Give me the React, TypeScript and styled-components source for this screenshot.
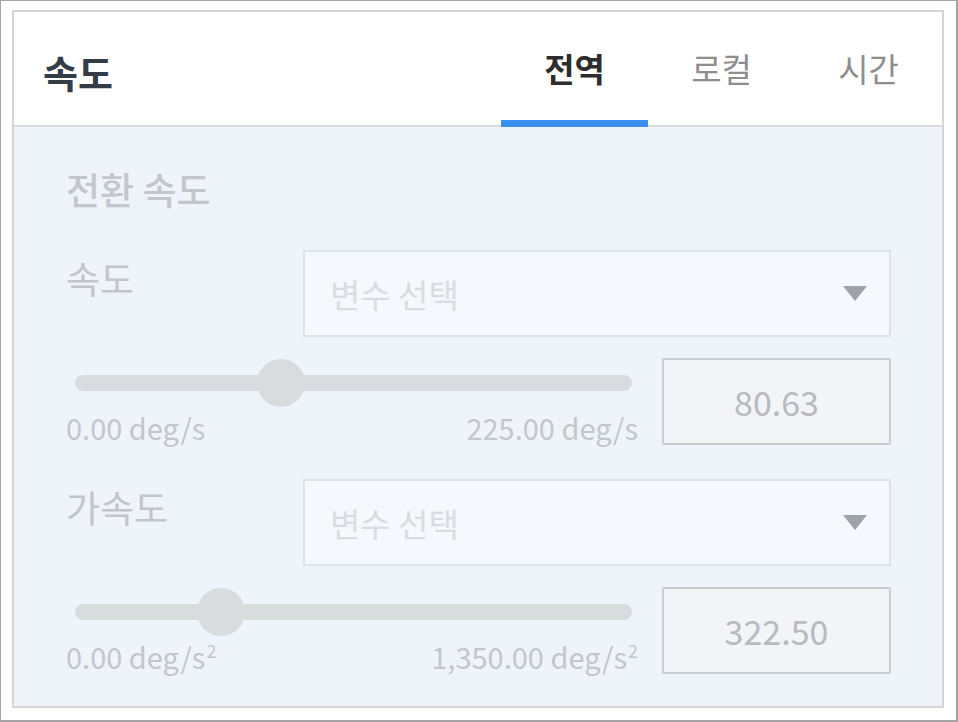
import React from "react";
import styled, { createGlobalStyle } from "styled-components";

const Global = createGlobalStyle`
  html, body { margin: 0; padding: 0; background: #ffffff; }
  body { font-family: "Noto Sans CJK KR", "Noto Sans", sans-serif; }
  * { box-sizing: border-box; }
`;

const Frame = styled.div`
  width: 958px;
  height: 722px;
  border: 1px solid #a4a4a4;
  border-right-width: 2px;
  border-bottom-width: 2px;
  padding: 9px 12px 12px 11px;
  display: flex;
`;

const Panel = styled.section`
  flex: 1;
  border: 2px solid #d4d5d7;
  background: #eff4fb;
  display: flex;
  flex-direction: column;
`;

const Header = styled.header`
  height: 115px;
  background: #ffffff;
  border-bottom: 2px solid #d9dadc;
  display: flex;
  align-items: stretch;
`;

const Title = styled.h1`
  flex: 1;
  margin: 0;
  padding-left: 29px;
  padding-top: 6px;
  display: flex;
  align-items: center;
  font-size: 38px;
  font-weight: 700;
  color: #343c47;
`;

const Tabs = styled.nav`
  display: flex;
`;

const Tab = styled.div<{ $active?: boolean }>`
  width: 147px;
  margin-bottom: -2px;
  padding-top: 4px;
  display: flex;
  align-items: center;
  justify-content: center;
  font-size: 33px;
  font-weight: ${(p) => (p.$active ? 700 : 400)};
  color: ${(p) => (p.$active ? "#2d2d2d" : "#8e8e8e")};
  border-bottom: 7px solid ${(p) => (p.$active ? "#3a8ff2" : "transparent")};
`;

const Body = styled.div`
  flex: 1;
  padding: 42px 51px 0 52px;
  display: flex;
  flex-direction: column;
`;

const SectionTitle = styled.h2`
  margin: 0 0 41px;
  height: 40px;
  line-height: 40px;
  font-size: 37px;
  font-weight: 500;
  color: #c3c7cd;
`;

const Field = styled.div<{ $gap?: number }>`
  display: flex;
  flex-direction: column;
  gap: 21px;
  margin-bottom: ${(p) => p.$gap ?? 0}px;
`;

const SelectRow = styled.div`
  display: flex;
  align-items: flex-start;
`;

const Label = styled.div`
  width: 237px;
  line-height: 56px;
  font-size: 37px;
  color: #c2c6cc;
`;

const Select = styled.div`
  flex: 1;
  height: 87px;
  border: 2px solid #dfe2e6;
  background: #f5f8fc;
  display: flex;
  align-items: center;
  justify-content: space-between;
  padding: 0 22px 0 25px;
  font-size: 33px;
  color: #d9dce1;
`;

const Caret = styled.span`
  width: 0;
  height: 0;
  border-left: 12px solid transparent;
  border-right: 12px solid transparent;
  border-top: 15px solid #9ea2a9;
`;

const SliderRow = styled.div`
  display: flex;
  align-items: flex-start;
  gap: 24px;
`;

const SliderCol = styled.div`
  flex: 1;
  display: flex;
  flex-direction: column;
`;

const TrackArea = styled.div`
  height: 48px;
  margin: 1px 6px 0 9px;
  display: flex;
  align-items: center;
  position: relative;
`;

const Track = styled.div`
  flex: 1;
  height: 16px;
  border-radius: 8px;
  background: #d9dcdf;
`;

const Thumb = styled.div`
  position: absolute;
  top: 0;
  width: 48px;
  height: 48px;
  border-radius: 50%;
  background: #d9dcdf;
  transform: translateX(-50%);
`;

const Range = styled.div`
  display: flex;
  justify-content: space-between;
  line-height: 40px;
  font-size: 29px;
  color: #c3c7cc;
  sup {
    font-size: 18px;
    vertical-align: 0;
    position: relative;
    top: -11px;
    margin-left: 1px;
  }
`;

const ValueBox = styled.div`
  width: 229px;
  height: 87px;
  border: 2px solid #cacdd2;
  border-radius: 2px;
  background: #f2f4f7;
  display: flex;
  align-items: center;
  justify-content: center;
  font-size: 34px;
  color: #b7bbc0;
`;

type FieldDef = {
  label: string;
  value: number;
  max: number;
  unit: React.ReactNode;
  minText: string;
  maxText: string;
  valueText: string;
};

const fields: FieldDef[] = [
  {
    label: "속도",
    value: 80.63,
    max: 225,
    unit: "deg/s",
    minText: "0.00",
    maxText: "225.00",
    valueText: "80.63",
  },
  {
    label: "가속도",
    value: 322.5,
    max: 1350,
    unit: (
      <>
        deg/s<sup>2</sup>
      </>
    ),
    minText: "0.00",
    maxText: "1,350.00",
    valueText: "322.50",
  },
];

function SpeedField({ f, gap }: { f: FieldDef; gap: number }) {
  const pct = f.value / f.max;
  return (
    <Field $gap={gap}>
      <SelectRow>
        <Label>{f.label}</Label>
        <Select>
          <span>변수 선택</span>
          <Caret />
        </Select>
      </SelectRow>
      <SliderRow>
        <SliderCol>
          <TrackArea>
            <Track />
            <Thumb style={{ left: `calc(24px + (100% - 48px) * ${pct})` }} />
          </TrackArea>
          <Range>
            <span>
              {f.minText} {f.unit}
            </span>
            <span>
              {f.maxText} {f.unit}
            </span>
          </Range>
        </SliderCol>
        <ValueBox>{f.valueText}</ValueBox>
      </SliderRow>
    </Field>
  );
}

export default function App() {
  return (
    <>
      <Global />
      <Frame>
        <Panel>
          <Header>
            <Title>속도</Title>
            <Tabs>
              <Tab $active>전역</Tab>
              <Tab>로컬</Tab>
              <Tab>시간</Tab>
            </Tabs>
          </Header>
          <Body>
            <SectionTitle>전환 속도</SectionTitle>
            <SpeedField f={fields[0]} gap={32} />
            <SpeedField f={fields[1]} gap={0} />
          </Body>
        </Panel>
      </Frame>
    </>
  );
}
